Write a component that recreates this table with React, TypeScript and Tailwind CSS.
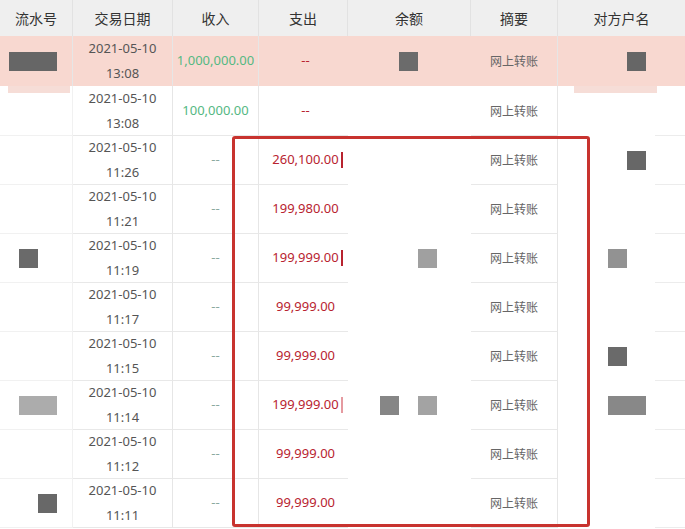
import React from 'react';

type Block = { gap: number; w: number; c: string };

interface Row {
  date: string;
  time: string;
  income: string;
  expense: string;
  pink?: boolean;
  serial?: Block[];
  balance?: Block[];
  party?: Block[];
  bar?: string;
}

// gap = space before the block (from cell edge or previous block)
const rows: Row[] = [
  { date: '2021-05-10', time: '13:08', income: '1,000,000.00', expense: '--', pink: true,
    serial: [{ gap: 9, w: 48, c: '#666666' }], balance: [{ gap: 51, w: 19, c: '#6b6b6b' }], party: [{ gap: 69, w: 19, c: '#666666' }] },
  { date: '2021-05-10', time: '13:08', income: '100,000.00', expense: '--' },
  { date: '2021-05-10', time: '11:26', income: '--', expense: '260,100.00', party: [{ gap: 69, w: 19, c: '#676767' }], bar: '#b8232f' },
  { date: '2021-05-10', time: '11:21', income: '--', expense: '199,980.00' },
  { date: '2021-05-10', time: '11:19', income: '--', expense: '199,999.00',
    serial: [{ gap: 19, w: 19, c: '#6a6a6a' }], balance: [{ gap: 70, w: 19, c: '#a0a0a0' }], party: [{ gap: 50, w: 19, c: '#929292' }], bar: '#b8232f' },
  { date: '2021-05-10', time: '11:17', income: '--', expense: '99,999.00' },
  { date: '2021-05-10', time: '11:15', income: '--', expense: '99,999.00', party: [{ gap: 50, w: 19, c: '#6a6a6a' }] },
  { date: '2021-05-10', time: '11:14', income: '--', expense: '199,999.00',
    serial: [{ gap: 19, w: 38, c: '#acacac' }], balance: [{ gap: 32, w: 19, c: '#868686' }, { gap: 19, w: 19, c: '#a3a3a3' }],
    party: [{ gap: 50, w: 38, c: '#888888' }], bar: '#e59aa0' },
  { date: '2021-05-10', time: '11:12', income: '--', expense: '99,999.00' },
  { date: '2021-05-10', time: '11:11', income: '--', expense: '99,999.00', serial: [{ gap: 38, w: 19, c: '#686868' }] },
];

const headers = ['流水号', '交易日期', '收入', '支出', '余额', '摘要', '对方户名'];

function Blocks({ items }: { items?: Block[] }) {
  if (!items) return null;
  return (
    <>
      {items.map((b, i) => (
        <div key={i} className="h-[19px] shrink-0" style={{ marginLeft: b.gap, width: b.w, background: b.c }} />
      ))}
    </>
  );
}

export default function App() {
  return (
    <div className="relative w-[685px] h-[529px] overflow-hidden bg-white" style={{ fontFamily: '"Noto Sans", "Noto Sans CJK SC", sans-serif' }}>
      <div className="grid grid-cols-[73px_100px_86px_89px_123px_87px_127px]">
        {/* Header */}
        {headers.map((h, i) => (
          <div
            key={h}
            className={`h-[36px] bg-[#efefef] flex items-center justify-center text-[14px] text-[#333] ${i < 6 ? 'border-r border-[#e2e2e2]' : ''}`}
          >
            {h}
          </div>
        ))}

        {rows.map((r, idx) => {
          const h = idx < 2 ? 'h-[50px]' : 'h-[49px]';
          const bg = r.pink ? 'bg-[#f8d8d0]' : 'bg-white';
          const line = r.pink ? 'border-b border-[#f8d8d0]' : 'border-b border-[#e8e8e8]';
          const incomeColor = r.income === '--' ? 'text-[#8aa9a0]' : 'text-[#55b883]';
          return (
            <React.Fragment key={idx}>
              <div className={`flex flex-col ${h} ${bg} border-r border-[#e6e6e6] ${r.pink ? '' : 'border-b border-[#f1f1f1]'}`}>
                {idx === 1 && <div className="ml-[8px] w-[62px] h-[7px] bg-[#f6ddd7]" />}
                <div className="flex flex-1 items-center">
                  <Blocks items={r.serial} />
                </div>
              </div>
              <div className={`${h} ${bg} ${line} border-r border-r-[#e6e6e6] flex flex-col items-center justify-center text-[13px] leading-[25px] text-[#555]`}>
                <span>{r.date}</span>
                <span>{r.time}</span>
              </div>
              <div className={`${h} ${bg} ${line} border-r border-r-[#e6e6e6] flex items-center justify-center text-[13px] ${incomeColor}`}>
                {r.income}
              </div>
              <div className={`relative ${h} ${bg} ${line} flex items-center justify-center pl-[4px] text-[13px] text-[#b8232f]`}>
                {r.expense}
                {r.bar && <div className="absolute left-[82px] top-1/2 -translate-y-1/2 w-[2px] h-[16px]" style={{ background: r.bar }} />}
              </div>
              <div className={`flex items-center ${h} ${bg}`}>
                <Blocks items={r.balance} />
              </div>
              <div className={`${h} ${bg} ${line} border-r border-r-[#e6e6e6] flex items-center justify-center text-[12px] text-[#666]`} style={{ fontFamily: '"Noto Sans CJK SC", sans-serif' }}>
                网上转账
              </div>
              <div className={`flex flex-col ${h} ${bg}`}>
                {idx === 1 && <div className="ml-[16px] w-[83px] h-[7px] bg-[#f6ddd7]" />}
                <div className="flex flex-1 items-center">
                  <Blocks items={r.party} />
                </div>
                {!r.pink && <div className="self-end w-[30px] h-px bg-[#ececec]" />}
              </div>
            </React.Fragment>
          );
        })}
      </div>

      {/* annotation frame drawn over the table */}
      <div className="absolute left-[232px] top-[136px] w-[358px] h-[391px] border-[3px] border-[#c8332f] rounded-[3px]" />
    </div>
  );
}
